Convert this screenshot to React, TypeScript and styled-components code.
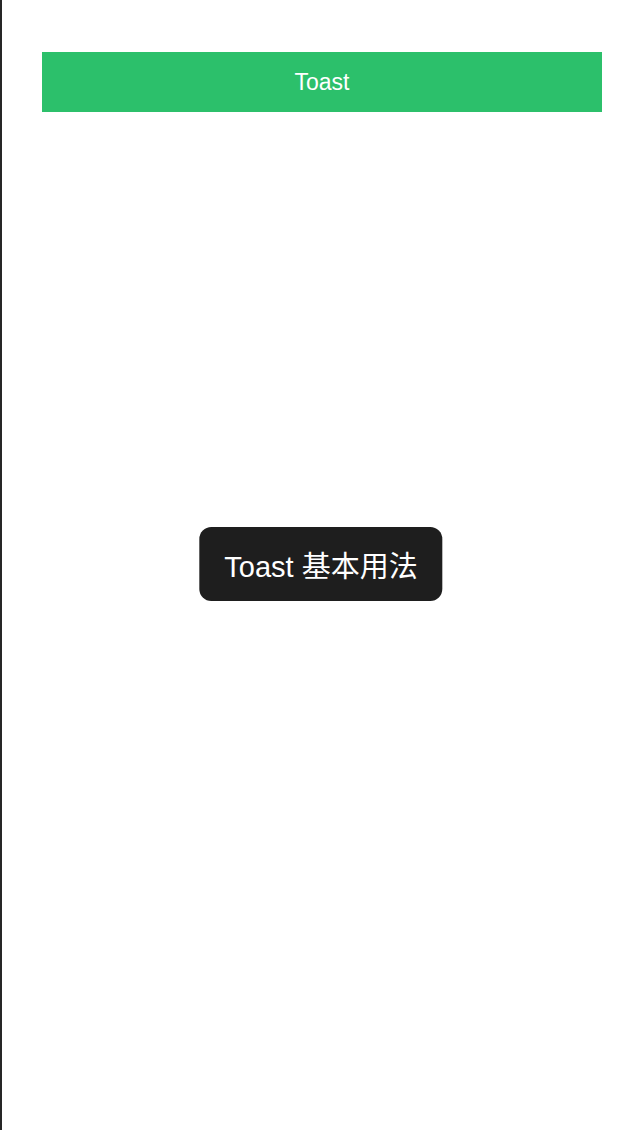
import React from "react";
import styled, { createGlobalStyle } from "styled-components";

const GlobalStyle = createGlobalStyle`
  html, body {
    margin: 0;
    padding: 0;
    background: #ffffff;
  }
  body {
    font-family: "Liberation Sans", "Noto Sans CJK SC", sans-serif;
  }
`;

const Page = styled.div`
  box-sizing: border-box;
  min-height: 1130px;
  border-left: 2px solid #262626;
  padding: 52px 40px 0 40px;
  background: #ffffff;
`;

const Button = styled.button`
  display: flex;
  align-items: center;
  justify-content: center;
  width: 100%;
  height: 60px;
  margin: 0;
  padding: 1px 0 0 0;
  border: none;
  border-radius: 0;
  background: #2cc06b;
  color: #ffffff;
  font-family: "Liberation Sans", "Noto Sans CJK SC", sans-serif;
  font-size: 23px;
  cursor: pointer;
`;

const Toast = styled.div`
  position: fixed;
  left: 50%;
  top: 50%;
  transform: translate(-50%, calc(-50% - 1px));
  box-sizing: border-box;
  display: flex;
  align-items: center;
  justify-content: center;
  height: 74px;
  padding: 0 25px;
  border-radius: 12px;
  background: #1e1e1e;
  color: #ffffff;
  font-family: "Liberation Sans", "Noto Sans CJK SC", sans-serif;
  font-size: 29px;
  white-space: nowrap;
`;

export default function App() {
  return (
    <>
      <GlobalStyle />
      <Page>
        <Button type="button">Toast</Button>
      </Page>
      <Toast>Toast 基本用法</Toast>
    </>
  );
}
